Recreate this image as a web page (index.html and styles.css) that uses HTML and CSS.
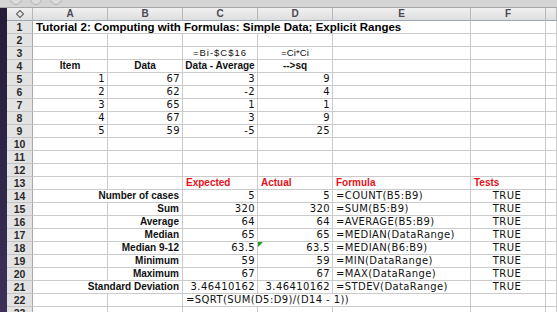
FILE: index.html
```html
<!DOCTYPE html>
<html>
<head>
<meta charset="utf-8">
<link rel="stylesheet" href="styles.css">
</head>
<body>
<div class="topbar">
  <span class="light"></span><span class="light"></span><span class="light"></span>
</div>
<div class="main">
  <div class="sheet">
    <div class="ch corner"><span class="diamond"></span></div>
    <div class="ch">A</div><div class="ch">B</div><div class="ch">C</div><div class="ch">D</div><div class="ch">E</div><div class="ch">F</div><div class="ch"></div>

    <div class="rh">1</div><div class="c s5 title">Tutorial 2: Computing with Formulas: Simple Data; Explicit Ranges</div><div class="c"></div><div class="c"></div>

    <div class="rh">2</div><div class="c"></div><div class="c"></div><div class="c"></div><div class="c"></div><div class="c"></div><div class="c"></div><div class="c"></div>

    <div class="rh">3</div><div class="c"></div><div class="c"></div><div class="c ctr note wide">=Bi-$C$16</div><div class="c ctr note">=Ci*Ci</div><div class="c"></div><div class="c"></div><div class="c"></div>

    <div class="rh">4</div><div class="c ctr b">Item</div><div class="c ctr b">Data</div><div class="c ctr b">Data - Average</div><div class="c ctr b">--&gt;sq</div><div class="c"></div><div class="c"></div><div class="c"></div>

    <div class="rh">5</div><div class="c num">1</div><div class="c num">67</div><div class="c num">3</div><div class="c num">9</div><div class="c"></div><div class="c"></div><div class="c"></div>
    <div class="rh">6</div><div class="c num">2</div><div class="c num">62</div><div class="c num">-2</div><div class="c num">4</div><div class="c"></div><div class="c"></div><div class="c"></div>
    <div class="rh">7</div><div class="c num">3</div><div class="c num">65</div><div class="c num">1</div><div class="c num">1</div><div class="c"></div><div class="c"></div><div class="c"></div>
    <div class="rh">8</div><div class="c num">4</div><div class="c num">67</div><div class="c num">3</div><div class="c num">9</div><div class="c"></div><div class="c"></div><div class="c"></div>
    <div class="rh">9</div><div class="c num">5</div><div class="c num">59</div><div class="c num">-5</div><div class="c num">25</div><div class="c"></div><div class="c"></div><div class="c"></div>

    <div class="rh">10</div><div class="c"></div><div class="c"></div><div class="c"></div><div class="c"></div><div class="c"></div><div class="c"></div><div class="c"></div>
    <div class="rh">11</div><div class="c"></div><div class="c"></div><div class="c"></div><div class="c"></div><div class="c"></div><div class="c"></div><div class="c"></div>
    <div class="rh">12</div><div class="c"></div><div class="c"></div><div class="c"></div><div class="c"></div><div class="c"></div><div class="c"></div><div class="c"></div>

    <div class="rh">13</div><div class="c"></div><div class="c"></div><div class="c red">Expected</div><div class="c red">Actual</div><div class="c red">Formula</div><div class="c red">Tests</div><div class="c"></div>

    <div class="rh">14</div><div class="c s2 lbl">Number of cases</div><div class="c num">5</div><div class="c num">5</div><div class="c fx">=COUNT(B5:B9)</div><div class="c ctr v">TRUE</div><div class="c"></div>
    <div class="rh">15</div><div class="c"></div><div class="c lbl">Sum</div><div class="c num">320</div><div class="c num">320</div><div class="c fx">=SUM(B5:B9)</div><div class="c ctr v">TRUE</div><div class="c"></div>
    <div class="rh">16</div><div class="c"></div><div class="c lbl">Average</div><div class="c num">64</div><div class="c num">64</div><div class="c fx">=AVERAGE(B5:B9)</div><div class="c ctr v">TRUE</div><div class="c"></div>
    <div class="rh">17</div><div class="c"></div><div class="c lbl">Median</div><div class="c num">65</div><div class="c num">65</div><div class="c fx">=MEDIAN(DataRange)</div><div class="c ctr v">TRUE</div><div class="c"></div>
    <div class="rh">18</div><div class="c"></div><div class="c lbl">Median 9-12</div><div class="c num">63.5</div><div class="c num flag">63.5</div><div class="c fx">=MEDIAN(B6:B9)</div><div class="c ctr v">TRUE</div><div class="c"></div>
    <div class="rh">19</div><div class="c"></div><div class="c lbl">Minimum</div><div class="c num">59</div><div class="c num">59</div><div class="c fx">=MIN(DataRange)</div><div class="c ctr v">TRUE</div><div class="c"></div>
    <div class="rh">20</div><div class="c"></div><div class="c lbl">Maximum</div><div class="c num">67</div><div class="c num">67</div><div class="c fx">=MAX(DataRange)</div><div class="c ctr v">TRUE</div><div class="c"></div>
    <div class="rh">21</div><div class="c s2 lbl">Standard Deviation</div><div class="c num">3.46410162</div><div class="c num">3.46410162</div><div class="c fx">=STDEV(DataRange)</div><div class="c ctr v">TRUE</div><div class="c"></div>
    <div class="rh">22</div><div class="c"></div><div class="c"></div><div class="c s3 fx">=SQRT(SUM(D5:D9)/(D14 - 1))</div><div class="c"></div><div class="c"></div>
    <div class="rh">23</div><div class="c"></div><div class="c"></div><div class="c"></div><div class="c"></div><div class="c"></div><div class="c"></div><div class="c"></div>
  </div>
</div>
</body>
</html>
```
FILE: styles.css
```css
* { box-sizing: border-box; }
html, body { margin: 0; padding: 0; }
body {
  width: 557px;
  height: 312px;
  overflow: hidden;
  background: linear-gradient(180deg, #241d38 0%, #30274a 60%, #3d3158 100%);
  font-family: "DejaVu Sans", Verdana, sans-serif;
}
.topbar {
  height: 8px;
  background: #d4d4d4;
  border-bottom: 1px solid #a8a8a8;
  display: flex;
  gap: 8px;
  padding-left: 10px;
  overflow: hidden;
}
.light {
  width: 12px;
  height: 12px;
  margin-top: -7px;
  border-radius: 50%;
  border: 1px solid #b2b2b2;
  background: #dcdcdc;
}
.main {
  padding-left: 7px;
}
.sheet {
  display: grid;
  grid-template-columns: 26px 75px 75px 75px 75px 138px 75px 1fr;
  grid-auto-rows: 13px;
  background: #fff;
}
.ch {
  background: linear-gradient(180deg, #f0f0f0, #dedede);
  border-right: 1px solid #b8b8b8;
  border-bottom: 1px solid #9aa6b4;
  font: bold 10px/12px "Liberation Sans", Arial, sans-serif;
  color: #4a4a55;
  text-align: center;
}
.corner {
  display: flex;
  align-items: center;
  justify-content: center;
}
.diamond {
  width: 6px;
  height: 6px;
  border: 1.5px solid #555;
  transform: rotate(45deg);
}
.rh {
  background: #e3e3e3;
  border-right: 1px solid #a9a9a9;
  border-bottom: 1px solid #c4c4c4;
  font: bold 10.5px/12px "Liberation Sans", Arial, sans-serif;
  color: #2a2a2a;
  text-align: center;
}
.c {
  position: relative;
  border-right: 1px solid #cbcbcb;
  border-bottom: 1px solid #cbcbcb;
  font-size: 10px;
  line-height: 12px;
  letter-spacing: 0.4px;
  color: #111;
  white-space: nowrap;
  overflow: visible;
  padding: 0 2px;
}
.s2 { grid-column: span 2; }
.s3 { grid-column: span 3; }
.s5 { grid-column: span 5; }
.title {
  font: bold 11.5px/12px "Liberation Sans", Arial, sans-serif;
  letter-spacing: 0;
  padding-left: 3px;
  color: #000;
}
.ctr { text-align: center; }
.num { text-align: right; padding-right: 2px; }
.b {
  font: bold 10px/12px "Liberation Sans", Arial, sans-serif;
  letter-spacing: 0;
}
.note {
  font: 9.5px/12px "Liberation Sans", Arial, sans-serif;
  letter-spacing: 0.1px;
}
.wide { letter-spacing: 1px; }
.red {
  font: bold 10px/12px "Liberation Sans", Arial, sans-serif;
  letter-spacing: 0;
  color: #e8101a;
  padding-left: 3px;
}
.lbl {
  font: bold 10px/12px "Liberation Sans", Arial, sans-serif;
  letter-spacing: 0;
  text-align: right;
  padding-right: 3px;
}
.fx { padding-left: 3px; }
.v { padding-left: 0; }
.flag::before {
  content: "";
  position: absolute;
  left: 0;
  top: 0;
  border-top: 5px solid #1f9a1f;
  border-right: 5px solid transparent;
}
```
